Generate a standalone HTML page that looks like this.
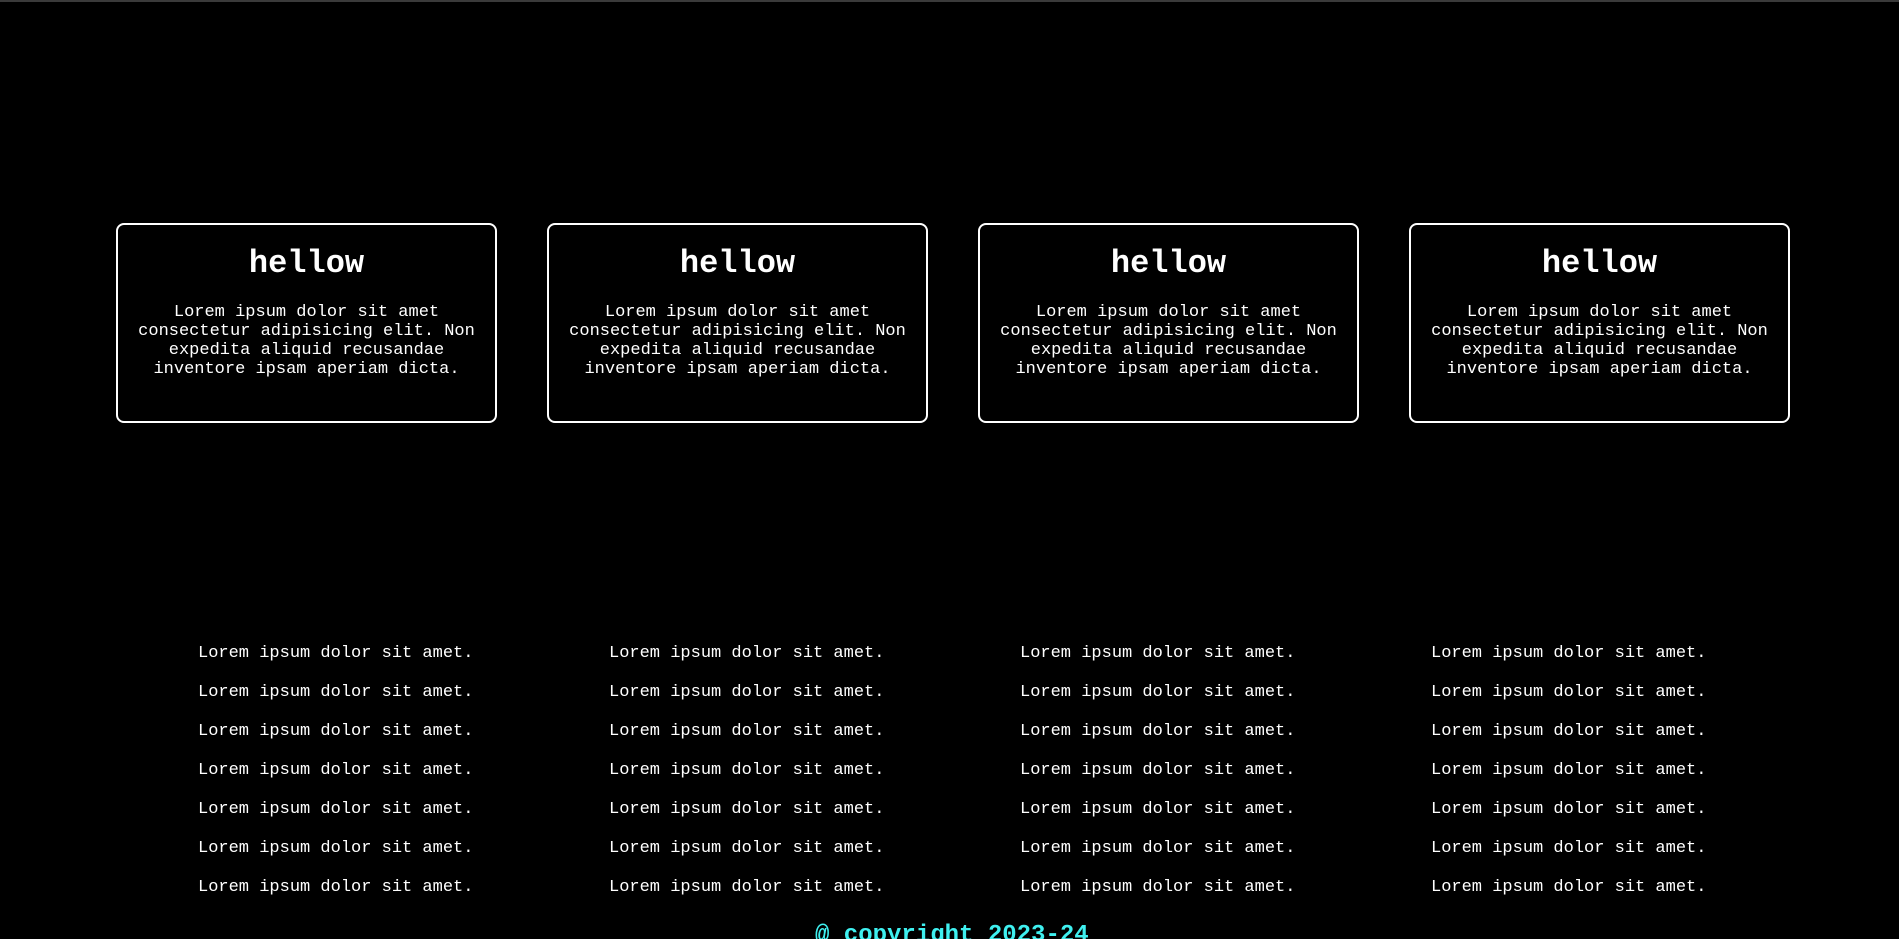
<!DOCTYPE html>
<html><head><meta charset="utf-8"><style>
html,body{margin:0;padding:0;background:#000;width:1899px;height:939px;overflow:hidden;position:relative;font-family:"Liberation Mono",monospace;color:#fff}
.top{position:absolute;left:0;top:0;width:1899px;height:2px;background:#3a3a3a}
.card{position:absolute;top:223px;width:377px;height:196px;border:2px solid #fff;border-radius:8px;text-align:center}
.card h2{position:absolute;left:0;right:0;top:20px;margin:0;font-size:32px;line-height:37px;font-weight:bold}
.card p{position:absolute;left:0;right:0;top:78px;margin:0;font-size:17px;line-height:19px}
.li{position:absolute;font-size:17px;line-height:20px;white-space:nowrap}
.copy{position:absolute;left:815px;top:922px;font-size:24px;font-weight:bold;color:#3ff0f0;line-height:28px;white-space:nowrap}
</style></head><body>
<div class="top"></div>
<div class="card" style="left:116px"><h2>hellow</h2><p>Lorem ipsum dolor sit amet<br>consectetur adipisicing elit. Non<br>expedita aliquid recusandae<br>inventore ipsam aperiam dicta.</p></div>
<div class="card" style="left:547px"><h2>hellow</h2><p>Lorem ipsum dolor sit amet<br>consectetur adipisicing elit. Non<br>expedita aliquid recusandae<br>inventore ipsam aperiam dicta.</p></div>
<div class="card" style="left:978px"><h2>hellow</h2><p>Lorem ipsum dolor sit amet<br>consectetur adipisicing elit. Non<br>expedita aliquid recusandae<br>inventore ipsam aperiam dicta.</p></div>
<div class="card" style="left:1409px"><h2>hellow</h2><p>Lorem ipsum dolor sit amet<br>consectetur adipisicing elit. Non<br>expedita aliquid recusandae<br>inventore ipsam aperiam dicta.</p></div>
<div class="li" style="left:198px;top:644px">Lorem ipsum dolor sit amet.</div>
<div class="li" style="left:198px;top:683px">Lorem ipsum dolor sit amet.</div>
<div class="li" style="left:198px;top:722px">Lorem ipsum dolor sit amet.</div>
<div class="li" style="left:198px;top:761px">Lorem ipsum dolor sit amet.</div>
<div class="li" style="left:198px;top:800px">Lorem ipsum dolor sit amet.</div>
<div class="li" style="left:198px;top:839px">Lorem ipsum dolor sit amet.</div>
<div class="li" style="left:198px;top:878px">Lorem ipsum dolor sit amet.</div>
<div class="li" style="left:609px;top:644px">Lorem ipsum dolor sit amet.</div>
<div class="li" style="left:609px;top:683px">Lorem ipsum dolor sit amet.</div>
<div class="li" style="left:609px;top:722px">Lorem ipsum dolor sit amet.</div>
<div class="li" style="left:609px;top:761px">Lorem ipsum dolor sit amet.</div>
<div class="li" style="left:609px;top:800px">Lorem ipsum dolor sit amet.</div>
<div class="li" style="left:609px;top:839px">Lorem ipsum dolor sit amet.</div>
<div class="li" style="left:609px;top:878px">Lorem ipsum dolor sit amet.</div>
<div class="li" style="left:1020px;top:644px">Lorem ipsum dolor sit amet.</div>
<div class="li" style="left:1020px;top:683px">Lorem ipsum dolor sit amet.</div>
<div class="li" style="left:1020px;top:722px">Lorem ipsum dolor sit amet.</div>
<div class="li" style="left:1020px;top:761px">Lorem ipsum dolor sit amet.</div>
<div class="li" style="left:1020px;top:800px">Lorem ipsum dolor sit amet.</div>
<div class="li" style="left:1020px;top:839px">Lorem ipsum dolor sit amet.</div>
<div class="li" style="left:1020px;top:878px">Lorem ipsum dolor sit amet.</div>
<div class="li" style="left:1431px;top:644px">Lorem ipsum dolor sit amet.</div>
<div class="li" style="left:1431px;top:683px">Lorem ipsum dolor sit amet.</div>
<div class="li" style="left:1431px;top:722px">Lorem ipsum dolor sit amet.</div>
<div class="li" style="left:1431px;top:761px">Lorem ipsum dolor sit amet.</div>
<div class="li" style="left:1431px;top:800px">Lorem ipsum dolor sit amet.</div>
<div class="li" style="left:1431px;top:839px">Lorem ipsum dolor sit amet.</div>
<div class="li" style="left:1431px;top:878px">Lorem ipsum dolor sit amet.</div>
<div class="copy">@ copyright 2023-24</div>
</body></html>
